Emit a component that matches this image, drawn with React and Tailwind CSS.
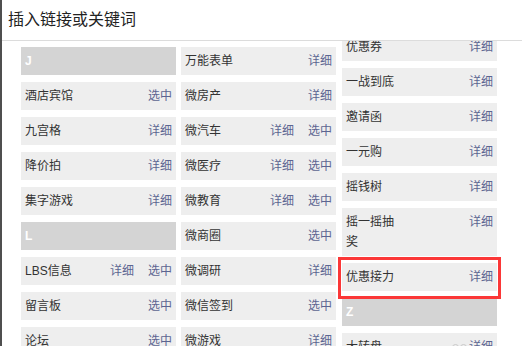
import React from 'react';

const columns = [
  {
    shift: false,
    items: [
      { head: 'J' },
      { label: '酒店宾馆', actions: ['选中'] },
      { label: '九宫格', actions: ['详细'] },
      { label: '降价拍', actions: ['详细'] },
      { label: '集字游戏', actions: ['详细'] },
      { head: 'L' },
      { label: 'LBS信息', actions: ['详细', '选中'] },
      { label: '留言板', actions: ['选中'] },
      { label: '论坛', actions: ['选中'] },
    ],
  },
  {
    shift: false,
    items: [
      { label: '万能表单', actions: ['详细'] },
      { label: '微房产', actions: ['详细'] },
      { label: '微汽车', actions: ['详细', '选中'] },
      { label: '微医疗', actions: ['详细', '选中'] },
      { label: '微教育', actions: ['详细', '选中'] },
      { label: '微商圈', actions: ['选中'] },
      { label: '微调研', actions: ['详细'] },
      { label: '微信签到', actions: ['选中'] },
      { label: '微游戏', actions: ['详细'] },
    ],
  },
  {
    shift: true,
    items: [
      { label: '优惠券', actions: ['详细'] },
      { label: '一战到底', actions: ['详细'] },
      { label: '邀请函', actions: ['详细'] },
      { label: '一元购', actions: ['详细'] },
      { label: '摇钱树', actions: ['详细'] },
      { label: '摇一摇抽奖', actions: ['详细'] },
      { label: '优惠接力', actions: ['详细'], marked: true },
      { head: 'Z' },
      { label: '大转盘', actions: ['详细'], watermark: true },
    ],
  },
];

const Row = ({ item }) => {
  if (item.head) {
    return (
      <div className="h-[28px] shrink-0 bg-[#d4d4d4] flex items-center px-[4px]">
        <span className="text-white text-[12px] font-bold font-['Liberation_Sans',sans-serif]">{item.head}</span>
      </div>
    );
  }

  return (
    <div className="relative shrink-0 bg-[#eeeeee] flex items-start justify-between px-[4px] py-[4px] text-[12px] leading-[20px]">
      <span className="max-w-[50px] text-[#333]">{item.label}</span>
      <div className="flex items-center gap-[14px] text-[#5c6591]">
        {item.watermark && (
          <span className="flex -mr-[12px] gap-px">
            <span className="w-[7px] h-[7px] rounded-full border border-[#c8c8c8]" />
            <span className="w-[7px] h-[7px] rounded-full border border-[#c8c8c8]" />
          </span>
        )}
        {item.actions.map((a, i) => (
          <span key={i}>{a}</span>
        ))}
      </div>
      {/* annotation box drawn over the card */}
      {item.marked && (
        <div className="absolute -top-[6px] -bottom-[8px] -left-[4px] -right-[4px] border-[3px] border-[#fb3737]" />
      )}
    </div>
  );
};

const App = () => {
  return (
    <div className="w-[522px] h-[346px] overflow-hidden bg-white border-l-2 border-[#4f4f4f] font-['Liberation_Sans','Noto_Sans_CJK_SC',sans-serif] flex flex-col">
      {/* Header */}
      <div className="h-[41px] shrink-0 border-b border-[#dcdcdc] flex items-center pl-[6px] relative z-10 bg-white">
        <h1 className="text-[16px] text-[#222]">插入链接或关键词</h1>
      </div>

      {/* Columns */}
      <div className="flex-1 overflow-hidden flex items-start gap-[5px] pl-[19px] pt-[6px]">
        {columns.map((col, ci) => (
          <div
            key={ci}
            className={`w-[155px] shrink-0 flex flex-col gap-[7px] ${col.shift ? '-mt-[14px] ml-px' : ''}`}
          >
            {col.items.map((item, i) => (
              <Row key={i} item={item} />
            ))}
          </div>
        ))}
      </div>
    </div>
  );
};

export default App;
